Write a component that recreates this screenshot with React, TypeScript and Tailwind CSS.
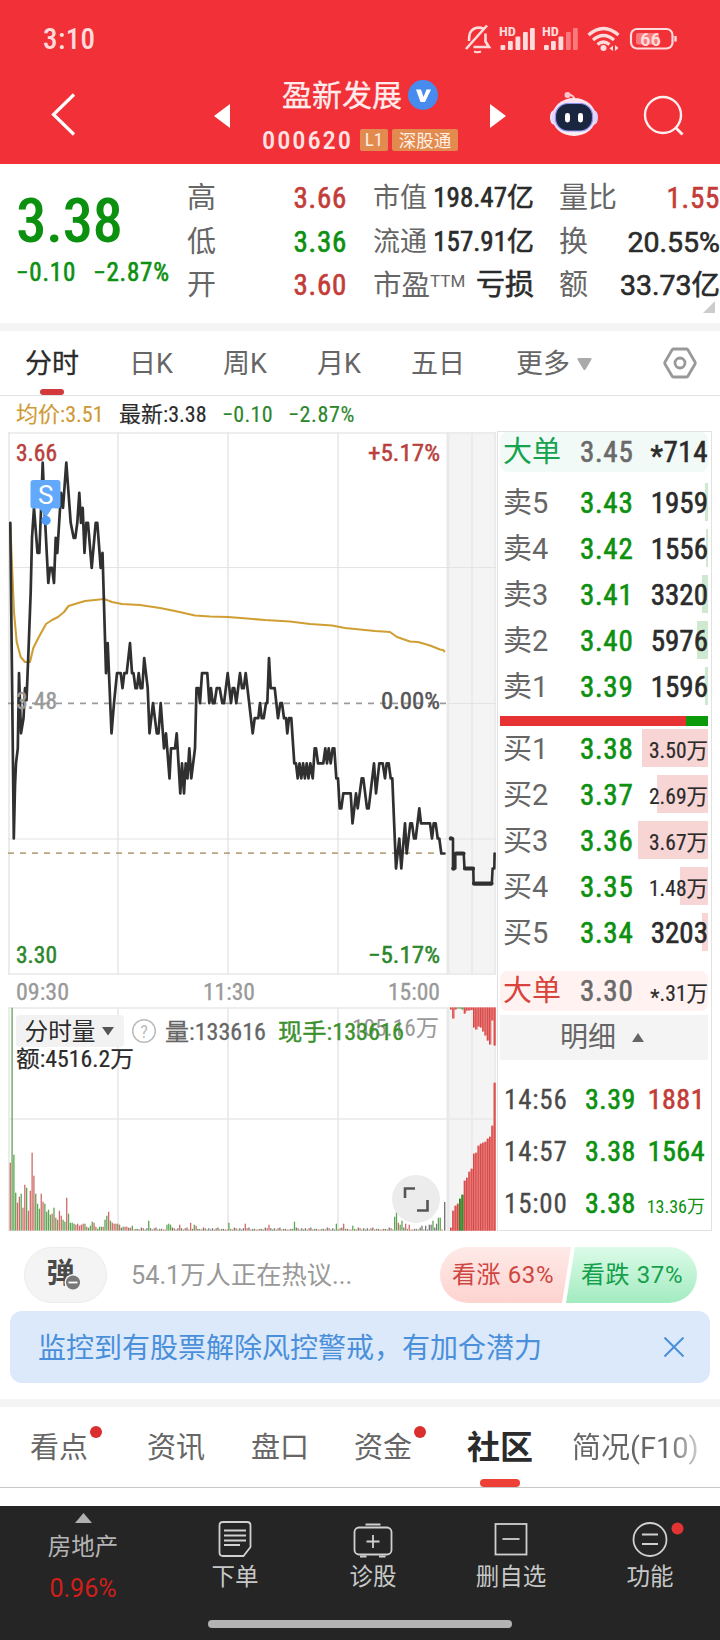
import React from "react";

const GREEN = "text-[#0c9010]";
const RED = "text-[#c33c38]";
const INK = "text-[#2b2b2b]";
const GRAY = "text-[#666666]";
const SEMI = "font-normal [-webkit-text-stroke:0.6px]";

/* ---------- chart data: [x, ticks of 0.01 away from the previous close] ---------- */
const price: [number, number][] = [
  [10.3, 12], [13.8, -9], [15, -5.5], [16, -4], [17.8, -3], [19, 2], [21, -2], [23.5, -1], [25, 1], [26.5, 0.2], [28.5, 3.5],
  [30.7, 7.4], [32, 11], [34, 13], [37.5, 10], [39.3, 10], [41, 12.8], [42.7, 16], [45.2, 12], [48.3, 8], [50, 9], [52, 9],
  [54, 8], [55.7, 11], [57.3, 10], [61, 14], [63, 13], [66.3, 16], [70.7, 12], [73.7, 11], [75.3, 11], [77.3, 12], [79.3, 14],
  [81, 12], [82.7, 13], [84.5, 10], [86.3, 12], [88, 12], [91.7, 9], [95.7, 12], [97.3, 12], [100.7, 9], [102.5, 10], [106, 2],
  [107.7, 4], [111.5, -2], [114, 0], [117, 2], [120.7, 2], [122.5, 1], [124.3, 2], [126.7, 2], [130, 4], [132, 2], [133.5, 2],
  [135.5, 1], [137, 1], [138.7, 2], [140.7, 1], [142.3, 1], [144.2, 3], [147.7, 1], [149.5, -2], [153, 0], [156.8, -2], [158.5, -2],
  [160.7, 0], [164, -3], [166, -2], [169.5, -5], [171, -3], [175, -3], [176.7, -2], [180.3, -6], [182, -4], [184, -6], [185.7, -4],
  [187.5, -5], [189.3, -3], [191.3, -5], [195, -3], [196.5, 1], [198.5, 1], [200, 0], [202, 2], [207.3, 2], [209.3, 0], [211, 1],
  [212.7, 0], [214.5, 0], [216.7, 1], [219.7, 1], [222.3, 0], [224, 0], [227.7, 2], [231, 0], [232.7, 1], [234.3, 1], [236.3, 0],
  [240, 2], [242, 1], [243.7, 1], [245.7, 2], [252.7, -2], [254.7, -1], [258.3, -1], [260, 0], [261.7, -1], [263.7, -1], [266, 0],
  [267.3, 0], [269, 3], [270.7, 1], [274.7, 1], [278, -1], [280.3, 0], [282, 0], [284, -1], [286, -1], [287.3, -2], [289, -1],
  [291.3, -1], [294.3, -4], [296, -4], [297.7, -5], [299.5, -4], [301.3, -5], [303.1, -4], [304.9, -5], [306.7, -4], [308.5, -5],
  [310.3, -4], [312.7, -5], [314.7, -3], [316, -3], [318, -4], [323.3, -4], [325.3, -3], [327, -4], [328.7, -3], [330.7, -4],
  [332.7, -3], [334.3, -3], [336.3, -5], [338, -5], [339.7, -7], [341.3, -7], [343.3, -6], [350.7, -6], [352.5, -8], [356, -6],
  [357.7, -7], [361.7, -5], [363.3, -5], [367, -7], [368.7, -7], [374, -4], [376, -6], [379.3, -4], [382.7, -4], [385, -5],
  [386.7, -4], [388.7, -4], [390.7, -5], [392.3, -5], [396, -11], [399.3, -9], [401.3, -11], [405, -8], [406.7, -10], [410.3, -8],
  [412, -8], [414, -9], [415.7, -9], [419.3, -7], [421, -8], [430, -8], [432, -9], [433.7, -8], [435.7, -8], [437.7, -9],
  [439.3, -9], [441.3, -10], [444.5, -10],
];
const closing: [number, number][] = [
  [451, -9], [453, -9], [453, -11], [455.3, -11], [455.3, -10], [463.7, -10], [464.5, -11], [473.3, -11], [473.6, -12],
  [491.8, -12], [492.6, -11], [494.3, -11], [494.6, -10],
];
const toPoints = (p: [number, number][]) => p.map(([x, k]) => `${x},${(703.2 - k * 15.03).toFixed(1)}`).join(" ");

const average =
  "10.3,524 11.7,558 14,612 16.7,642 20.7,657 25,662 30,662 33.3,648 38.3,638 46,624 52,620 58,617 64,612 68.5,606 75,604 85,601 95,600 104,599 112,602 122,604 140,605 160,608 175,611 195,615.5 210,616.5 228,617 247,618.5 265,620 290,621.5 310,624 332,625.5 345,628 375,631 390,632 397,637 410,641.5 418,642 430,645.5 440,649.5 443,650 445,652";

type Bar = [number, string];
const opening: Bar[] = [
  [68, "r"], [223, "g"], [76, "g"], [38, "g"], [28, "r"], [34, "r"], [37, "g"], [23, "r"], [46, "r"], [43, "g"], [20, "r"], [40, "r"],
  [78, "r"], [55, "r"], [37, "g"], [27, "g"], [22, "g"], [37, "r"], [29, "r"], [27, "g"], [19, "g"], [21, "g"], [16, "g"], [17, "r"],
  [23, "g"], [13, "r"], [11, "g"], [20, "r"], [15, "r"], [11, "g"], [9, "g"], [33, "r"], [17, "g"], [8, "g"], [8, "g"], [7, "g"],
  [6, "r"], [7, "r"], [5, "r"], [6, "r"], [7, "r"], [7, "g"], [4, "r"], [3, "g"], [5, "g"], [9, "g"], [8, "r"], [4, "r"],
  [2, "g"], [4, "g"], [4, "g"], [4, "r"], [11, "g"], [15, "g"], [19, "r"], [10, "g"], [8, "r"], [7, "r"], [7, "r"], [7, "g"],
  [6, "r"], [3, "k"], [4, "g"], [4, "r"], [4, "r"], [3, "k"], [3, "r"], [5, "g"],
];
const spikes: Record<number, Bar> = {
  76: [10, "g"], 86: [6, "g"], 87: [7, "g"], 88: [6, "g"], 93: [6, "r"], 99: [8, "r"], 101: [6, "g"], 102: [5, "r"], 120: [8, "g"],
  129: [7, "r"], 142: [6, "r"], 156: [9, "g"], 179: [7, "g"], 183: [7, "r"], 188: [5, "g"], 211: [14, "g"], 212: [26, "g"], 213: [8, "r"],
  214: [6, "g"], 215: [10, "g"], 217: [7, "r"], 219: [6, "r"], 226: [5, "k"], 228: [5, "k"], 230: [6, "k"], 231: [6, "k"], 232: [10, "g"],
  234: [7, "k"], 235: [13, "g"], 236: [13, "g"],
};
const volume: Bar[] = Array.from({ length: 238 }, (_, i) => {
  if (i < opening.length) return opening[i];
  if (spikes[i]) return spikes[i];
  const n = (i * 7919 + 31 * i * i) % 17;
  return [1.2 + (n % 5) * 0.65, n % 3 === 0 ? "r" : n % 3 === 1 ? "g" : "k"] as Bar;
});
const barColor: Record<string, string> = { r: "#cf6a68", g: "#5da552", k: "#777777" };

const auctionUp = [3, 20, 25, 27, 32, 36, 50, 53, 59, 62, 77, 78, 85, 87, 88, 89, 92, 94, 105, 148];
const auctionDown = [2, 11, 2, 1, 1, 2, 6, 3, 3, 2.5, 20, 22, 19, 20, 24, 28, 33, 37, 13, 38];

function Chart() {
  return (
    <svg width="489" height="800" viewBox="8 431 489 800" className="block font-normal" fontSize="23">
      <rect x="447" y="432" width="49" height="543" fill="#f4f4f4" />
      <rect x="447" y="1007" width="49" height="224" fill="#f4f4f4" />
      <g stroke="#e9e9e9" strokeWidth="1.7" fill="none">
        <path d="M8 433H496M8 974H496M8 1008H496" />
        <path d="M9 432V975M118 432V975M228 432V975M338 432V975M472 432V975M495.3 432V975" />
        <path d="M9 1007V1231M118 1007V1231M228 1007V1231M338 1007V1231M472 1007V1231M495.3 1007V1231" />
        <path d="M8 1119H496" />
        <path d="M448 432V975M448 1007V1231" strokeWidth="3" />
      </g>
      <path d="M8 567.6H496M8 839H496M448 703.4H496" stroke="#e2e2e2" strokeWidth="1" />
      <path d="M8 703.4H447" stroke="#9c9c9c" strokeWidth="1.7" strokeDasharray="6 6" />
      <path d="M8 853.2H440" stroke="#b8a682" strokeWidth="1.8" strokeDasharray="6 6" />
      <polyline points={average} fill="none" stroke="#cf9f33" strokeWidth="2.1" strokeLinejoin="round" />
      <polyline points={toPoints(price)} fill="none" stroke="#303030" strokeWidth="2.7" strokeLinejoin="round" strokeLinecap="round" />
      <polyline points={toPoints(closing)} fill="none" stroke="#303030" strokeWidth="2.6" strokeLinejoin="round" strokeLinecap="round" />
      <path d="M456 853.5H463.5M465 868.5H473M474 883.6H491.5" stroke="#303030" strokeWidth="4.2" strokeLinecap="round" />
      <circle cx="451" cy="838.4" r="2.2" fill="#303030" />
      <circle cx="453.4" cy="868.6" r="2.2" fill="#303030" />

      <path d="M33.5 480H57.500Q60.500 480 60.500 483V505.500Q60.500 508.500 57.500 508.500H52Q49 513 45.700 517.500Q42 511 39 508.500H33.500Q30.500 508.500 30.500 505.500V483Q30.500 480 33.500 480Z" fill="#62a8fb" />
      <path d="M47.500 516Q50 510 56 508.500H52Z" fill="#ffffff" />
      <circle cx="46" cy="520.500" r="4.700" fill="#4f9bf8" />
      <text x="45.600" y="503.500" fontSize="26" fill="#ffffff" textAnchor="middle" className="[font-stretch:100%]">S</text>

      <g strokeWidth="0.45">
        <text x="16" y="461" fill="#b9403c" stroke="#b9403c" textLength="41" lengthAdjust="spacingAndGlyphs">3.66</text>
        <text x="368" y="461" fill="#b9403c" stroke="#b9403c" textLength="72" lengthAdjust="spacingAndGlyphs">+5.17%</text>
        <text x="16" y="709" fill="#999999" stroke="#999999" textLength="41" lengthAdjust="spacingAndGlyphs">3.48</text>
        <text x="381" y="709" fill="#555555" stroke="#555555" textLength="59" lengthAdjust="spacingAndGlyphs">0.00%</text>
        <text x="16" y="963" fill="#2c862b" stroke="#2c862b" textLength="41" lengthAdjust="spacingAndGlyphs">3.30</text>
        <text x="368" y="963" fill="#2c862b" stroke="#2c862b" textLength="72" lengthAdjust="spacingAndGlyphs">−5.17%</text>
      </g>
      <g fill="#999999" stroke="#999999" strokeWidth="0.3">
        <text x="16" y="1000" textLength="53" lengthAdjust="spacingAndGlyphs">09:30</text>
        <text x="203" y="1000" textLength="52" lengthAdjust="spacingAndGlyphs">11:30</text>
        <text x="388" y="1000" textLength="52" lengthAdjust="spacingAndGlyphs">15:00</text>
      </g>

      {volume.map(([h, c], i) => (
        <rect key={i} x={9.6 + i * 1.822} y={1230.7 - h} width="1.3" height={h} fill={barColor[c]} />
      ))}
      <rect x="444" y="1202" width="1.4" height="28.700" fill="#777777" />
      {auctionUp.map((h, i) => (
        <g key={i} fill={i === 4 || i === 5 ? "#4b9a3a" : "#f07070"}>
          <rect x={450 + i * 2.3} y={1230.7 - h} width="2.3" height={h} />
          <rect x={450 + i * 2.3} y={1230.7 - h} width="1" height={h} fill={i === 4 || i === 5 ? "#2f7a26" : "#c94a48"} />
        </g>
      ))}
      {auctionDown.map((h, i) => (
        <g key={i}>
          <rect x={450 + i * 2.3} y="1007.500" width="2.3" height={h} fill={i > 2 && i < 6 ? "#7fae6c" : "#f07070"} />
          <rect x={450 + i * 2.3} y="1007.500" width="1" height={h} fill={i > 2 && i < 6 ? "#5b9a4a" : "#c94a48"} />
        </g>
      ))}

      <rect x="16" y="1015" width="108" height="32" rx="4" fill="#f2f2f2" />
      <text x="24.500" y="1040" fill="#2b2b2b" fontSize="24" textLength="71" lengthAdjust="spacingAndGlyphs">分时量</text>
      <path d="M102 1027H114L108 1035.500Z" fill="#555555" />
      <circle cx="144" cy="1031" r="11.300" fill="none" stroke="#bbbbbb" strokeWidth="1.500" />
      <text x="144" y="1037.500" fill="#bbbbbb" fontSize="18" textAnchor="middle">?</text>
      <text x="165" y="1040" fill="#666666" stroke="#666666" strokeWidth="0.3" textLength="101" lengthAdjust="spacingAndGlyphs">量:133616</text>
      <text x="352" y="1036" fill="#999999" textLength="87" lengthAdjust="spacingAndGlyphs">105.16万</text>
      <text x="278" y="1040" fill="#3c912e" stroke="#3c912e" strokeWidth="0.4" textLength="126" lengthAdjust="spacingAndGlyphs">现手:133616</text>
      <text x="16" y="1067" fill="#2b2b2b" stroke="#2b2b2b" strokeWidth="0.2" textLength="118" lengthAdjust="spacingAndGlyphs">额:4516.2万</text>

      <circle cx="416" cy="1199" r="24" fill="#ececec" />
      <path d="M405 1198V1188.500H415M427.500 1200V1210.500H417" fill="none" stroke="#555555" strokeWidth="2.600" />
    </svg>
  );
}

function StatusBar() {
  return (
    <div className="flex h-[78px] items-center justify-between pl-[43px] pr-[43px] text-[#ffdcdc]">
      <span className="text-[29px] leading-[78px] tracking-[0.4px] font-medium">3:10</span>
      <svg width="212" height="30" viewBox="465 24 212 30" fill="none" stroke="#ffdcdc" strokeWidth="2.600">
        <path d="M487 25.500L466 49" />
        <path d="M483.500 28.500Q474 25.500 470 33Q469 36 469 41M473.500 47H489L485.500 41.500V33.500" />
        <path d="M474 51.500Q477.500 53 481 51.500" strokeWidth="2" />
        <g fill="#ffdcdc" stroke="none">
          <text x="499" y="35.500" fontSize="12" fontWeight="700" textLength="17" lengthAdjust="spacingAndGlyphs">HD</text>
          <text x="542" y="35.500" fontSize="12" fontWeight="700" textLength="17" lengthAdjust="spacingAndGlyphs">HD</text>
          <rect x="500.500" y="45" width="4.800" height="5" rx="1" />
          <rect x="508" y="41" width="4.800" height="9" rx="1" />
          <rect x="515.500" y="36.500" width="4.800" height="13.500" rx="1" />
          <rect x="523" y="32" width="4.800" height="18" rx="1" />
          <rect x="530" y="28" width="4.800" height="22" rx="1" />
          <rect x="544" y="45" width="4.800" height="5" rx="1" />
          <rect x="551" y="41" width="4.800" height="9" rx="1" />
          <rect x="558.500" y="36.500" width="4.800" height="13.500" rx="1" />
          <rect x="566" y="32" width="4.800" height="18" rx="1" fill="#f9797c" />
          <rect x="573" y="28" width="4.800" height="22" rx="1" fill="#f9797c" />
          <circle cx="603.500" cy="48" r="3" />
          <path d="M613 45.500V51L609.500 48.500ZM615 51V45L618.500 48Z" />
        </g>
        <path d="M588.500 35Q603.500 22 618.500 35M593 40Q603.500 31 614 40M597.500 44.500Q603.500 39.500 609.500 44.500" strokeWidth="3.200" />
        <rect x="631" y="29" width="41.500" height="19.500" rx="6" strokeWidth="2.200" />
        <rect x="636" y="33" width="23" height="11.500" rx="2" fill="#f9797c" stroke="none" />
        <path d="M675.500 36V41.500" strokeWidth="2.400" />
        <text x="640" y="45.500" fontSize="18.500" fontWeight="500" fill="#ffdcdc" stroke="none" textLength="21" lengthAdjust="spacingAndGlyphs">66</text>
      </svg>
    </div>
  );
}

function TitleBar() {
  return (
    <div className="flex h-[86px] text-white">
      <svg className="ml-[48px] mt-[14px]" width="30" height="46" viewBox="48 92 30 46" fill="none" stroke="#fff" strokeWidth="3.200">
        <path d="M74 94.500L53.500 114.500L74 134.500" />
      </svg>
      <svg className="ml-[136px] mt-[26px]" width="16" height="24" viewBox="0 0 16 24" fill="#fff">
        <path d="M0 12L16 0V24Z" />
      </svg>
      <div className="ml-[30px] flex w-[200px] flex-col items-center">
        <div className="flex h-[34px] items-center gap-[6px]">
          <span className="whitespace-nowrap pt-[2px] text-[30px] leading-[34px] text-[#ffecec] [-webkit-text-stroke:0.3px]">盈新发展</span>
          <svg width="30" height="30" viewBox="0 0 30 30">
            <circle cx="15" cy="15" r="15" fill="#478bee" />
            <path d="M8 9.500H13L15.500 17L18.500 9.500H23L17 22H12.500Z" fill="#fff" />
          </svg>
        </div>
        <div className="mt-[13px] flex h-[30px] items-center">
          <span className="w-[98px] text-[26.500px] font-medium leading-[30px] tracking-[1.900px] text-[#ffe2e2]">000620</span>
          <span className="flex h-[22px] w-[28px] items-center justify-center rounded-[2px] bg-[#e38a4e] text-[19px] leading-[22px] text-[#fff0e4]">L1</span>
          <span className="ml-[4px] flex h-[22px] w-[66px] items-center justify-center whitespace-nowrap rounded-[2px] bg-[#e38a4e] pt-[1px] text-[17.500px] leading-[22px] text-[#fff0e4]">深股通</span>
        </div>
      </div>
      <svg className="ml-[30px] mt-[26px]" width="16" height="24" viewBox="0 0 16 24" fill="#fff">
        <path d="M16 12L0 0V24Z" />
      </svg>
      <svg className="ml-[43px] mt-[12px]" width="50" height="48" viewBox="549 90 50 48">
        <defs>
          <linearGradient id="shell" x1="0" y1="0" x2="0" y2="1">
            <stop offset="0" stopColor="#ffe6ee" />
            <stop offset="0.550" stopColor="#e3d2fb" />
            <stop offset="1" stopColor="#fff1f0" />
          </linearGradient>
        </defs>
        <path d="M567 95Q573 94 575 100" fill="none" stroke="#ffc4cc" strokeWidth="2" />
        <circle cx="567.500" cy="95" r="3" fill="#ffc4cc" />
        <ellipse cx="553.500" cy="117.500" rx="3.500" ry="7" fill="#e9e4fb" />
        <ellipse cx="594.500" cy="117.500" rx="3.500" ry="7" fill="#d9d2fb" />
        <ellipse cx="574" cy="117" rx="22" ry="19" fill="url(#shell)" />
        <rect x="555.500" y="103.500" width="37" height="27.500" rx="12.500" fill="#1a2540" stroke="#8a93f3" strokeWidth="1.200" />
        <rect x="565" y="113" width="5" height="9.500" rx="2.400" fill="#fff" />
        <rect x="578" y="113" width="5" height="9.500" rx="2.400" fill="#fff" />
      </svg>
      <svg className="ml-[44px] mt-[16px]" width="42" height="42" viewBox="643 94 42 42" fill="none" stroke="#fff0f0" strokeWidth="2.400">
        <circle cx="663" cy="115" r="18" />
        <path d="M676 128L682.500 134.500" strokeWidth="2.800" />
      </svg>
    </div>
  );
}

function Stat({ label, value, tone }: { label: React.ReactNode; value: string; tone: string }) {
  return (
    <div className="flex h-[43.500px] items-center justify-between whitespace-nowrap leading-[43px]">
      <span className={GRAY}>{label}</span>
      <span className={`${SEMI} ${tone}`}>{value}</span>
    </div>
  );
}

function Stats() {
  return (
    <section className="flex h-[159px] bg-white pt-[13px]">
      <div className={`w-[187px] pl-[16px] ${GREEN}`}>
        <div className="mt-[11px] h-[66px] text-[61px] font-medium leading-[66px] tracking-[-0.500px]">3.38</div>
        <div className={`mt-[4px] flex gap-[17px] whitespace-nowrap text-[25px] leading-[30px] tracking-[0.800px] ${SEMI}`}>
          <span>−0.10</span>
          <span>−2.87%</span>
        </div>
      </div>
      <div className="w-[160px] text-[29px]">
        <Stat label="高" value="3.66" tone={`${RED} tracking-[0.700px]`} />
        <Stat label="低" value="3.36" tone={`${GREEN} tracking-[0.700px]`} />
        <Stat label="开" value="3.60" tone={`${RED} tracking-[0.700px]`} />
      </div>
      <div className="ml-[26px] w-[161px] text-[27px]">
        <Stat label="市值" value="198.47亿" tone={INK} />
        <Stat label="流通" value="157.91亿" tone={INK} />
        <Stat label={<span className="text-[28.500px]">市盈<sup className="top-[-8px] text-[17px] leading-none [font-stretch:100%]">TTM</sup></span>} value="亏损" tone={`${INK} text-[29px]`} />
      </div>
      <div className="ml-[25px] w-[161px] text-[29px]">
        <Stat label="量比" value="1.55" tone={`${RED} tracking-[0.700px]`} />
        <Stat label="换" value="20.55%" tone={`${INK} text-[28.500px] [font-stretch:100%]`} />
        <Stat label="额" value="33.73亿" tone={`${INK} text-[28.500px] [font-stretch:100%]`} />
        <svg className="ml-auto mr-[5px] mt-[-7px]" width="12" height="12" viewBox="0 0 12 12">
          <path d="M12 0V12H0Z" fill="#cccccc" />
        </svg>
      </div>
    </section>
  );
}

function PeriodTabs() {
  return (
    <nav className={`flex h-[65px] border-b border-[#e2e2e2] text-[27px] leading-[67px] [font-stretch:100%] ${GRAY}`}>
      <div className="ml-[25px] w-[104px]">
        <div className={`h-[58px] [-webkit-text-stroke:0.3px] ${INK}`}>分时</div>
        <div className="ml-[15px] h-[6px] w-[24px] rounded-full bg-[#d3383a]" />
      </div>
      <div className="w-[94px]">日K</div>
      <div className="w-[94px]">周K</div>
      <div className="w-[94px]">月K</div>
      <div className="w-[105px]">五日</div>
      <div className="flex w-[147px]">
        更多
        <svg className="ml-[7px] mt-[27px]" width="15" height="13" viewBox="0 0 15 13">
          <path d="M1.500 0H13.500Q15 0 14.500 1.500L8.500 11.500Q7.500 13 6.500 11.500L.5 1.500Q0 0 1.500 0Z" fill="#aaaaaa" />
        </svg>
      </div>
      <svg className="mt-[15px]" width="34" height="34" viewBox="0 0 34 34" fill="none" stroke="#999999" strokeWidth="2.800" strokeLinejoin="round">
        <path d="M10.500 3H23.500Q24.500 3 25 4L32 16Q32.500 17 32 18L25 30Q24.500 31 23.500 31H10.500Q9.500 31 9 30L2 18Q1.500 17 2 16L9 4Q9.500 3 10.500 3Z" />
        <circle cx="17" cy="17" r="5" />
      </svg>
    </nav>
  );
}

type Order = { label: string; price: string; qty: string; bar: string };
const sells: Order[] = [
  { label: "卖5", price: "3.43", qty: "1959", bar: "w-[3px]" },
  { label: "卖4", price: "3.42", qty: "1556", bar: "w-[2px]" },
  { label: "卖3", price: "3.41", qty: "3320", bar: "w-[6px]" },
  { label: "卖2", price: "3.40", qty: "5976", bar: "w-[11px]" },
  { label: "卖1", price: "3.39", qty: "1596", bar: "w-[3px]" },
];
const buys: Order[] = [
  { label: "买1", price: "3.38", qty: "3.50万", bar: "w-[66px]" },
  { label: "买2", price: "3.37", qty: "2.69万", bar: "w-[51px]" },
  { label: "买3", price: "3.36", qty: "3.67万", bar: "w-[70px]" },
  { label: "买4", price: "3.35", qty: "1.48万", bar: "w-[28px]" },
  { label: "买5", price: "3.34", qty: "3203", bar: "w-[6px]" },
];

function OrderRow({ o, color }: { o: Order; color: string }) {
  const small = o.qty.includes("万");
  return (
    <div className="relative flex h-[38px] items-center whitespace-nowrap pl-[3px] text-[29px] leading-[38px]">
      <div className={`absolute right-0 top-0 h-[38px] ${o.bar} ${color}`} />
      <span className={`relative w-[77px] pt-[2px] [font-stretch:100%] ${GRAY}`}>{o.label}</span>
      <span className={`relative pt-[1px] tracking-[0.700px] ${SEMI} ${GREEN}`}>{o.price}</span>
      <span className={`relative ml-auto ${INK} ${small ? "pt-[6px] text-[21.500px] [-webkit-text-stroke:0.2px]" : `pt-[1px] ${SEMI}`}`}>{o.qty}</span>
    </div>
  );
}

function BigOrder({ price, qty, tone, bg, small }: { price: string; qty: string; tone: string; bg: string; small?: boolean }) {
  return (
    <div className={`flex h-[40px] items-center whitespace-nowrap rounded-[8px] pl-[3px] text-[29px] leading-[40px] ${bg}`}>
      <span className={`w-[77px] ${tone}`}>大单</span>
      <span className={`tracking-[0.700px] text-[#6a6a6a] ${SEMI}`}>{price}</span>
      <span className={`ml-auto ${INK} ${small ? "pt-[6px] text-[21.500px] [-webkit-text-stroke:0.2px]" : `tracking-[0.500px] ${SEMI}`}`}>
        <span className="relative top-[4px]">*</span>
        {qty}
      </span>
    </div>
  );
}

function Trade({ time, price, qty, tone, small }: { time: string; price: string; qty: string; tone: string; small?: boolean }) {
  return (
    <div className="flex h-[52px] items-center whitespace-nowrap pl-[4px] pr-[3px] text-[27px] leading-[52px]">
      <span className="w-[81px] tracking-[0.800px] text-[#4a4a4a] [-webkit-text-stroke:0.3px]">{time}</span>
      <span className={`text-[28px] tracking-[0.500px] ${SEMI} ${GREEN}`}>{price}</span>
      <span className={`ml-auto ${tone} ${small ? "pt-[6px] text-[18px]" : `text-[28px] tracking-[0.500px] ${SEMI}`}`}>{qty}</span>
    </div>
  );
}

function OrderBook() {
  return (
    <aside className="h-[800px] w-[215px] border border-[#e2e2e2] pl-[2px] pr-[3px]">
      <BigOrder price="3.45" qty="714" tone="text-[#16a34f]" bg="bg-[#f1faf6]" />
      <div className="mt-[11px] flex flex-col gap-[8px]">{sells.map((o) => <OrderRow key={o.label} o={o} color="bg-[#cfe9d0]" />)}</div>
      <div className="mt-[11px] flex h-[10px]">
        <div className="w-[186px] bg-[#e63232]" />
        <div className="flex-1 bg-[#0a9a0a]" />
      </div>
      <div className="mt-[3px] flex flex-col gap-[8px]">{buys.map((o) => <OrderRow key={o.label} o={o} color="bg-[#f8d5d5]" />)}</div>
      <div className="mt-[20px]">
        <BigOrder price="3.30" qty=".31万" tone="text-[#d8433c]" bg="bg-[#fff2f0]" small />
      </div>
      <div className={`mt-[4px] flex h-[45px] items-center justify-center gap-[16px] bg-[#f4f4f4] pr-[4px] text-[28px] leading-[45px] ${GRAY}`}>
        <span>明细</span>
        <svg width="12" height="9" viewBox="0 0 12 9"><path d="M6 0L12 9H0Z" fill="#666" /></svg>
      </div>
      <div className="mt-[14px]">
        <Trade time="14:56" price="3.39" qty="1881" tone={RED} />
        <Trade time="14:57" price="3.38" qty="1564" tone={GREEN} />
        <Trade time="15:00" price="3.38" qty="13.36万" tone={GREEN} small />
      </div>
    </aside>
  );
}

function Sentiment() {
  return (
    <div className="flex h-[56px] items-center whitespace-nowrap pl-[24px] pr-[23px]">
      <div className="flex h-[56px] w-[83px] items-center justify-center rounded-[28px] border border-[#ececec] bg-[#f4f4f4]">
        <svg width="44" height="48" viewBox="-4 -7 44 48">
          <text x="-1.500" y="25" fontSize="28" fontWeight="700" fill="#4a4a4a">弹</text>
          <circle cx="25" cy="24.500" r="7.800" fill="#777777" stroke="#f4f4f4" strokeWidth="1.500" />
          <path d="M20.500 24.500H29.500" stroke="#fff" strokeWidth="1.800" />
        </svg>
      </div>
      <span className="ml-[24px] pt-[1px] text-[25.300px] leading-[54px] text-[#999999] [font-stretch:100%]">54.1万人正在热议...</span>
      <div className="ml-auto flex h-[56px] w-[257px] text-[24px] leading-[57px] tracking-[0.600px] [font-stretch:100%]">
        <div className="w-[131px] rounded-l-[28px] bg-gradient-to-b from-[#feeae8] to-[#fdd3cf] pl-[12px] text-[#cf4640] [clip-path:polygon(0_0,100%_0,122px_100%,0_100%)]">
          看涨 63%
        </div>
        <div className="ml-[-5px] flex-1 rounded-r-[28px] bg-gradient-to-b from-[#dcfbe8] to-[#a2ebc0] pl-[15px] text-[#14a04a] [clip-path:polygon(9px_0,100%_0,100%_100%,0_100%)]">
          看跌 37%
        </div>
      </div>
    </div>
  );
}

function SectionTabs() {
  const dot = "absolute right-[-14px] top-[19px] h-[12px] w-[12px] rounded-full bg-[#d92f2f]";
  return (
    <nav className={`flex h-[81px] border-b border-[#c8c8c8] text-[29px] leading-[82px] [font-stretch:100%] ${GRAY}`}>
      <div className="ml-[30px] w-[117px]"><span className="relative inline-block whitespace-nowrap">看点<i className={dot} /></span></div>
      <div className="w-[104px]">资讯</div>
      <div className="w-[103px]">盘口</div>
      <div className="w-[113px]"><span className="relative inline-block whitespace-nowrap">资金<i className={dot} /></span></div>
      <div className="w-[105px]">
        <div className="h-[72px] text-[33px] font-bold text-[#2b2b2b]">社区</div>
        <div className="ml-[13px] h-[8px] w-[40px] rounded-full bg-[#ee4037]" />
      </div>
      <div className="h-[72px] whitespace-nowrap bg-gradient-to-r from-[#666666] from-75% to-[#d0d0d0] bg-clip-text text-transparent [font-stretch:100%]">简况(F10)</div>
    </nav>
  );
}

function NavItem({ width, label, children }: { width: string; label: string; children: React.ReactNode }) {
  return (
    <div className={`flex flex-col items-center ${width}`}>
      <svg className="mt-[13px] overflow-visible" width="60" height="42" viewBox="0 0 60 42" fill="none" stroke="#d0d0d0" strokeWidth="1.800">
        {children}
      </svg>
      <span className="mt-[1px] whitespace-nowrap text-[23.500px] leading-[30px] text-[#c8c8c8]">{label}</span>
    </div>
  );
}

function BottomNav() {
  return (
    <footer className="flex h-[134px] flex-col items-center bg-[#252525]">
      <div className="flex h-[114px] w-full">
        <div className="flex w-[166px] flex-col items-center">
          <svg className="mt-[7px]" width="17" height="10" viewBox="0 0 17 10"><path d="M8.500 0L17 10H0Z" fill="#b0b0b0" /></svg>
          <span className="mt-[9px] text-[23.500px] leading-[30px] text-[#b4b4b4]">房地产</span>
          <span className="mt-[12px] text-[25px] leading-[30px] text-[#d01f1a] [font-stretch:100%]">0.96%</span>
        </div>
        <NavItem width="w-[138px]" label="下单">
          <path d="M18 3H42Q45.500 3 45.500 6.500V28L38.500 37H18Q14.500 37 14.500 33.500V6.500Q14.500 3 18 3Z" />
          <path d="M19 11.500H41M19 16.500H41M19 21.500H41M19 26H35" />
        </NavItem>
        <NavItem width="w-[138px]" label="诊股">
          <rect x="11.500" y="8.500" width="37" height="27" rx="4.500" />
          <path d="M30 16V29M23.500 22.500H36.500" />
          <path d="M22.500 5.500H37.500M17 37.500H23.500M36 37.500H42.500" strokeWidth="2.200" />
        </NavItem>
        <NavItem width="w-[138px]" label="删自选">
          <rect x="14.500" y="5" width="31" height="30.500" />
          <path d="M21.500 20H38.500" />
        </NavItem>
        <NavItem width="w-[140px]" label="功能">
          <circle cx="30" cy="20.500" r="16.500" />
          <path d="M22 15.500H38M22 25H38" />
          <circle cx="57.500" cy="9.500" r="6" fill="#e23432" stroke="none" />
        </NavItem>
      </div>
      <div className="h-[8px] w-[304px] rounded-full bg-[#b3b3b3]" />
    </footer>
  );
}

export default function App() {
  return (
    <div className="flex h-[1640px] w-[720px] flex-col overflow-hidden bg-white font-['Roboto','Noto_Sans_CJK_SC',sans-serif] [font-stretch:87%]">
      <header className="h-[164px] bg-[#f23038]">
        <StatusBar />
        <TitleBar />
      </header>
      <Stats />
      <div className="h-[8px] bg-[#f4f4f4]" />
      <PeriodTabs />
      <div className="flex h-[35px] items-start whitespace-nowrap pl-[16px] text-[22px] leading-[38px] [-webkit-text-stroke:0.15px]">
        <span className="w-[103px] text-[#cf9a35]">均价:3.51</span>
        <span className={`w-[103px] ${INK}`}>最新:3.38</span>
        <span className="w-[66px] tracking-[0.300px] text-[#2c862b]">−0.10</span>
        <span className="tracking-[0.600px] text-[#2c862b]">−2.87%</span>
      </div>
      <main className="flex pl-[8px]">
        <Chart />
        <OrderBook />
      </main>
      <div className="mt-[16px]">
        <Sentiment />
      </div>
      <div className="mx-[10px] mt-[8px] flex h-[72px] shrink-0 items-center justify-between whitespace-nowrap rounded-[12px] bg-[#dbe9fb] pl-[28px] pr-[26px] text-[28px] leading-[70px] text-[#4a8fda]">
        <span className="pt-[3px]">监控到有股票解除风控警戒，有加仓潜力</span>
        <svg width="20" height="20" viewBox="0 0 20 20" stroke="#4a8fda" strokeWidth="2">
          <path d="M.5.5L19.500 19.500M19.500.5L.5 19.500" />
        </svg>
      </div>
      <div className="mt-[16px] h-[8px] shrink-0 bg-[#f4f4f4]" />
      <SectionTabs />
      <div className="mt-auto">
        <BottomNav />
      </div>
    </div>
  );
}
